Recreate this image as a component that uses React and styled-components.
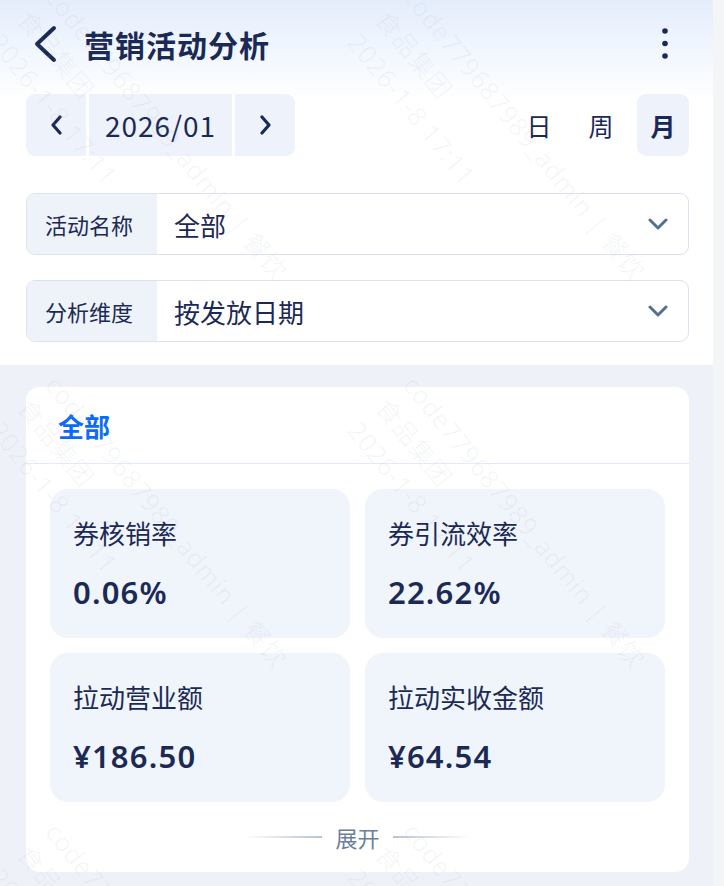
import React from 'react'
import styled, { createGlobalStyle } from 'styled-components'

const GlobalStyle = createGlobalStyle`
  html, body {
    margin: 0;
    padding: 0;
    background: #f4f5f7;
  }
  body {
    font-family: "Noto Sans CJK SC", "Noto Sans", sans-serif;
    color: #1b2a55;
  }
  * { box-sizing: border-box; }
`

const metrics = [
  { label: '券核销率', value: '0.06%' },
  { label: '券引流效率', value: '22.62%' },
  { label: '拉动营业额', value: '¥186.50' },
  { label: '拉动实收金额', value: '¥64.54' },
]

const filters = [
  { label: '活动名称', value: '全部' },
  { label: '分析维度', value: '按发放日期' },
]

const marks = [
  { x: 66, y: -20 }, { x: 424, y: -20 },
  { x: 66, y: 368 }, { x: 424, y: 368 },
  { x: 66, y: 815 }, { x: 424, y: 815 },
]

function BackIcon() {
  return (
    <svg width="26" height="40" viewBox="0 0 26 40">
      <path d="M21 4 L4 20 L21 36" fill="none" stroke="#1b2a55" strokeWidth="4" strokeLinecap="round" strokeLinejoin="round" />
    </svg>
  )
}

function MoreIcon() {
  return (
    <svg width="8" height="34" viewBox="0 0 8 34">
      <circle cx="4" cy="4" r="2.8" fill="#1b2a55" />
      <circle cx="4" cy="16.5" r="2.8" fill="#1b2a55" />
      <circle cx="4" cy="29" r="2.8" fill="#1b2a55" />
    </svg>
  )
}

function Arrow({ dir }) {
  const d = dir === 'left' ? 'M10 2 L3 10 L10 18' : 'M3 2 L10 10 L3 18'
  return (
    <svg width="13" height="20" viewBox="0 0 13 20">
      <path d={d} fill="none" stroke="#1b2a55" strokeWidth="3.2" strokeLinecap="round" strokeLinejoin="round" />
    </svg>
  )
}

function DownIcon() {
  return (
    <svg width="20" height="12" viewBox="0 0 20 12">
      <path d="M2 2 L10 10 L18 2" fill="none" stroke="#55708e" strokeWidth="3" strokeLinecap="round" strokeLinejoin="round" />
    </svg>
  )
}

export default function App() {
  return (
    <>
      <GlobalStyle />
      <Shell>
        <Main>
          <Top>
            <Header>
              <BackIcon />
              <Title>营销活动分析</Title>
              <More><MoreIcon /></More>
            </Header>

            <DateRow>
              <Picker>
                <Seg $side="left"><Arrow dir="left" /></Seg>
                <Seg $wide>2026/01</Seg>
                <Seg $side="right"><Arrow dir="right" /></Seg>
              </Picker>
              <Tabs>
                <Tab>日</Tab>
                <Tab>周</Tab>
                <Tab $active>月</Tab>
              </Tabs>
            </DateRow>

            <Filters>
              {filters.map((f) => (
                <Filter key={f.label}>
                  <FilterLabel>{f.label}</FilterLabel>
                  <FilterValue>{f.value}</FilterValue>
                  <DownIcon />
                </Filter>
              ))}
            </Filters>
          </Top>

          <Content>
            <Card>
              <CardHead>全部</CardHead>
              <Grid>
                {metrics.map((m) => (
                  <Tile key={m.label}>
                    <TileLabel>{m.label}</TileLabel>
                    <TileValue>{m.value}</TileValue>
                  </Tile>
                ))}
              </Grid>
              <Expand>
                <Line />
                <span>展开</span>
                <Line $flip />
              </Expand>
            </Card>
          </Content>

          <Watermarks>
            {marks.map((m, i) => (
              <Mark key={i} style={{ left: m.x, top: m.y }}>
                <div>code779687989_admin | 餐饮</div>
                <div>食品集团</div>
                <div>2026-1-8 17:11</div>
              </Mark>
            ))}
          </Watermarks>
        </Main>
        <Track />
      </Shell>
    </>
  )
}

const Shell = styled.div`
  display: flex;
  min-height: 886px;
`

const Main = styled.div`
  position: relative;
  flex: 1;
  background: #eef2f8;
  overflow: hidden;
`

const Track = styled.div`
  width: 11px;
  background: #f4f5f7;
`

const Top = styled.div`
  background: linear-gradient(180deg, #e4edfc 0px, #f4f8fe 60px, #ffffff 100px, #ffffff 100%);
  padding-bottom: 23px;
`

const Header = styled.div`
  height: 88px;
  display: flex;
  align-items: center;
  padding: 0 44px 0 33px;
`

const Title = styled.h1`
  margin: 0 0 0 25px;
  font-size: 30px;
  font-weight: 700;
  letter-spacing: 1px;
  color: #1b2a55;
`

const More = styled.div`
  margin-left: auto;
  display: flex;
`

const DateRow = styled.div`
  margin-top: 6px;
  display: flex;
  justify-content: space-between;
  padding: 0 24px 0 26px;
`

const Picker = styled.div`
  display: flex;
  gap: 3px;
`

const Seg = styled.div`
  height: 62px;
  width: ${(p) => (p.$wide ? '143px' : '60px')};
  display: flex;
  align-items: center;
  justify-content: center;
  background: #eef2fa;
  border-radius: ${(p) =>
    p.$side === 'left' ? '9px 0 0 9px' : p.$side === 'right' ? '0 9px 9px 0' : '0'};
  font-size: 28px;
  letter-spacing: 1px;
  color: #1b2a55;
`

const Tabs = styled.div`
  display: flex;
  gap: 10px;
`

const Tab = styled.div`
  width: 52px;
  height: 62px;
  display: flex;
  align-items: center;
  justify-content: center;
  border-radius: 9px;
  font-size: 25px;
  font-weight: ${(p) => (p.$active ? 700 : 400)};
  background: ${(p) => (p.$active ? '#eef2fa' : 'transparent')};
  color: #1b2a55;
`

const Filters = styled.div`
  margin-top: 37px;
  padding: 0 24px 0 26px;
  display: flex;
  flex-direction: column;
  gap: 25px;
`

const Filter = styled.div`
  height: 62px;
  display: flex;
  align-items: center;
  border: 1.5px solid #dce3ee;
  border-radius: 9px;
  overflow: hidden;
  padding-right: 20px;
  background: #fff;
`

const FilterLabel = styled.div`
  width: 130px;
  height: 100%;
  display: flex;
  align-items: center;
  padding-left: 18px;
  background: #eef2f9;
  font-size: 22px;
  color: #1b2a55;
`

const FilterValue = styled.div`
  flex: 1;
  padding-left: 17px;
  font-size: 26px;
  color: #1b2a55;
`

const Content = styled.div`
  padding: 22px 24px 14px 26px;
`

const Card = styled.div`
  background: #fff;
  border-radius: 14px;
`

const CardHead = styled.div`
  height: 77px;
  display: flex;
  align-items: center;
  padding-left: 32px;
  font-size: 26px;
  font-weight: 700;
  color: #0a6cf5;
  border-bottom: 1.5px solid #e3ebf8;
`

const Grid = styled.div`
  display: grid;
  grid-template-columns: 1fr 1fr;
  gap: 15px;
  padding: 25px 24px 0 24px;
`

const Tile = styled.div`
  height: 149px;
  border-radius: 18px;
  background: #f0f4fb;
  padding: 25px 0 0 23px;
`

const TileLabel = styled.div`
  font-size: 26px;
  line-height: 38px;
  color: #1b2a55;
`

const TileValue = styled.div`
  margin-top: 20px;
  font-family: "Noto Sans", "Noto Sans CJK SC", sans-serif;
  font-size: 31px;
  line-height: 40px;
  font-weight: 600;
  letter-spacing: 1.2px;
  color: #1b2a55;
`

const Expand = styled.div`
  height: 70px;
  display: flex;
  align-items: center;
  justify-content: center;
  gap: 13px;
  font-size: 22px;
  color: #6a7f98;
`

const Line = styled.div`
  width: 78px;
  height: 2px;
  background: linear-gradient(
    ${(p) => (p.$flip ? '270deg' : '90deg')},
    rgba(184, 198, 212, 0) 0%,
    #b6c4d3 100%
  );
`

const Watermarks = styled.div`
  position: absolute;
  inset: 0;
  pointer-events: none;
`

const Mark = styled.div`
  position: absolute;
  transform-origin: 0 0;
  transform: rotate(51deg);
  white-space: nowrap;
  font-family: "Noto Sans", "Noto Sans CJK SC", sans-serif;
  font-size: 25px;
  font-weight: 300;
  line-height: 36px;
  letter-spacing: 1px;
  color: rgba(150, 162, 185, 0.12);
`
